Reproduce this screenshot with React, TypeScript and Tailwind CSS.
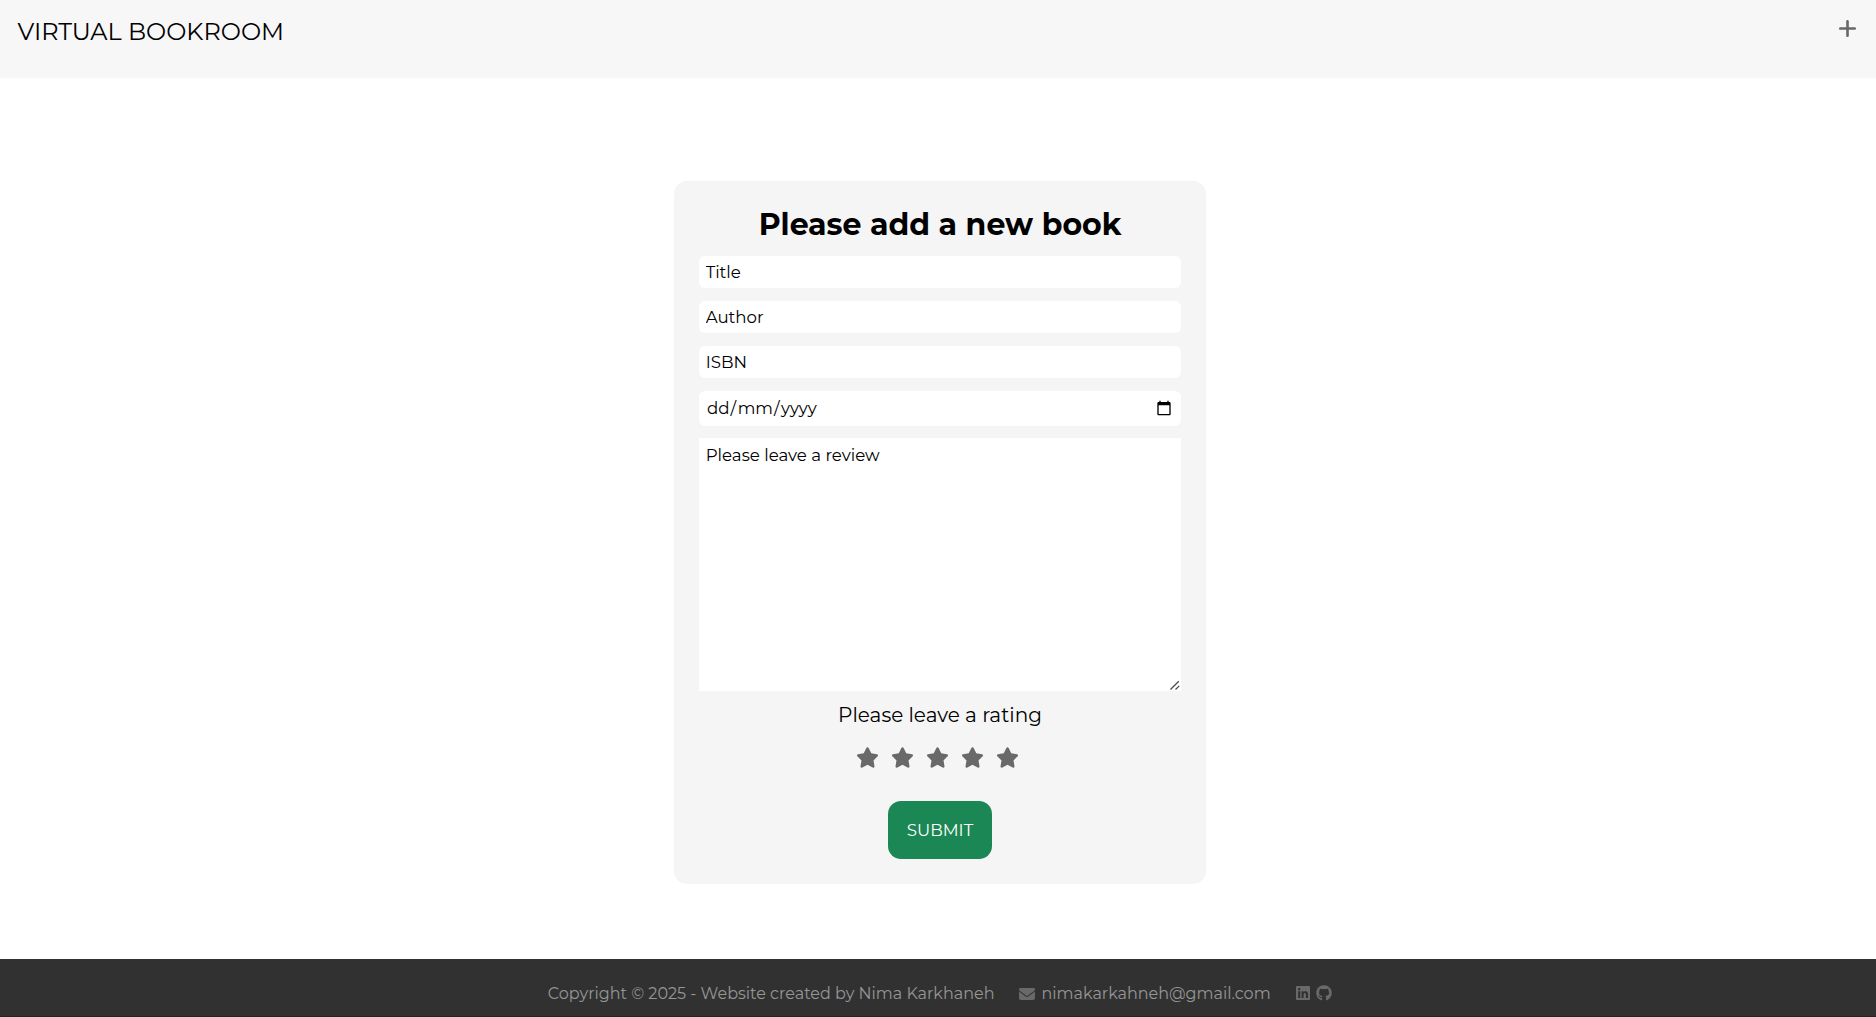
import { FaPlus, FaStar, FaEnvelope, FaLinkedin, FaGithub } from 'react-icons/fa6';

const fields = ['Title', 'Author', 'ISBN'];

function CalendarIcon() {
  return (
    <svg width="16" height="16" viewBox="0 0 24 24" fill="#000" aria-hidden="true">
      <path d="M20 3h-1V1h-2v2H7V1H5v2H4c-1.1 0-2 .9-2 2v16c0 1.1.9 2 2 2h16c1.1 0 2-.9 2-2V5c0-1.1-.9-2-2-2zm0 18H4V8h16v13z" />
    </svg>
  );
}

function ResizeGrip() {
  return (
    <svg width="11" height="11" viewBox="0 0 11 11" className="pointer-events-none absolute right-px bottom-0" stroke="#4a4a4a" strokeWidth="1.3" fill="none" aria-hidden="true">
      <path d="M1.5 9.5 9.8 1.2M6.5 9.5 10.3 5.9" />
    </svg>
  );
}

export default function App() {
  return (
    <div className="flex h-screen flex-col overflow-hidden bg-white font-['Montserrat','Inter',sans-serif] text-black">
      <header className="flex h-[78px] shrink-0 items-start justify-between bg-[#f7f7f7] pr-[18px] pl-[17.5px]">
        <h1 className="mt-4 text-[24px] leading-8">VIRTUAL BOOKROOM</h1>
        <button type="button" aria-label="Add a book" className="mt-[18px] text-[#696969]">
          <FaPlus size={21} />
        </button>
      </header>

      <main className="flex flex-1 justify-center pl-1 pt-[103px]">
        <form className="flex h-[703px] w-[532px] flex-col items-center rounded-[13px] bg-[#f5f5f5] px-[25px] pt-[26px]">
          <h2 className="text-[30px] leading-9 font-bold whitespace-nowrap">Please add a new book</h2>
          <div className="mt-[13px] flex w-full flex-col gap-[13px]">
            {fields.map((label) => (
              <input
                key={label}
                type="text"
                placeholder={label}
                className="block h-8 w-full rounded-md bg-white px-[6.65px] text-[16.64px] placeholder:text-black"
              />
            ))}
            <div className="flex h-[35px] w-full items-center justify-between rounded-md bg-white pb-[2px] pr-[9.5px] pl-[7px]">
              <span className="flex text-[16.64px] leading-6">
                <span className="px-px">dd</span>/<span className="pr-px pl-[1.5px]">mm</span>/<span className="pr-px pl-[1.5px]">yyyy</span>
              </span>
              <CalendarIcon />
            </div>
          </div>
          <div className="relative mt-3 h-[253px] w-full shrink-0">
            <textarea
              placeholder="Please leave a review"
              className="block h-full w-full resize-none bg-white px-[6.65px] py-[5px] text-[16.64px] leading-6 placeholder:text-black"
            />
            <ResizeGrip />
          </div>
          <p className="mt-[8px] text-[20px] leading-8">Please leave a rating</p>
          <div className="mt-[15px] flex gap-[12px] pr-[6px] text-[#696969]">
            {[1, 2, 3, 4, 5].map((n) => (
              <FaStar key={n} size={23} />
            ))}
          </div>
          <button type="button" className="mt-8 h-[58px] w-[104px] rounded-[13px] bg-[#1a8754] pt-px text-[16.64px] text-white">
            SUBMIT
          </button>
        </form>
      </main>

      <footer className="flex h-[58px] shrink-0 items-center justify-center border-b border-[#242424] bg-[#313131] pt-[12px] pl-1 text-[16px] leading-6 text-[#969696]">
        <span>Copyright © 2025 - Website created by Nima Karkhaneh</span>
        <span className="ml-[25px] flex items-center">
          <FaEnvelope size={16} className="text-[#696969]" />
          <span className="ml-[6px]">nimakarkahneh@gmail.com</span>
        </span>
        <span className="ml-[24.5px] flex items-center gap-[5px] text-[#696969]">
          <FaLinkedin size={16} className="-mt-px" />
          <FaGithub size={16} className="-mt-px" />
        </span>
      </footer>
    </div>
  );
}
